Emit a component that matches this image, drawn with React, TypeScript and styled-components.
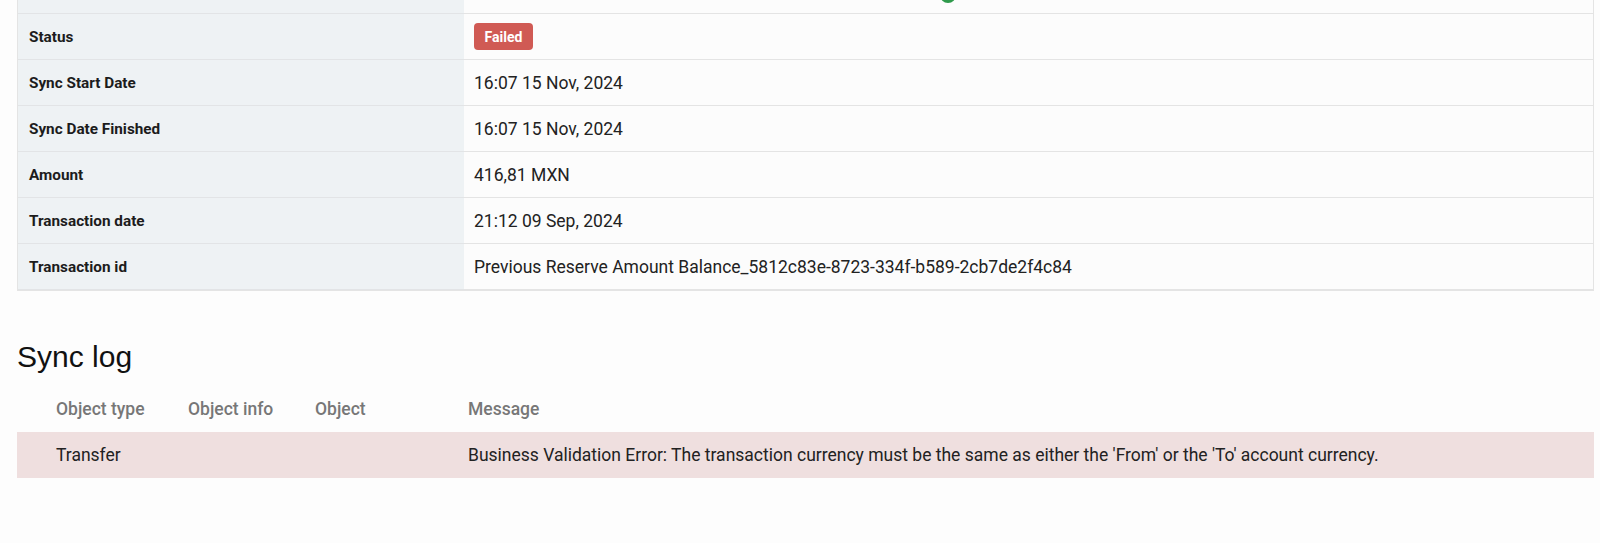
import { styled, createGlobalStyle } from 'styled-components';

const GlobalStyle = createGlobalStyle`
  body {
    margin: 0;
    background: #fdfdfd;
    font-family: Roboto, 'Liberation Sans', Arial, sans-serif;
    color: #222;
  }
`;

const Page = styled.div`
  padding: 0 6px 0 17px;
`;

const DetailTable = styled.div`
  display: grid;
  grid-template-columns: 446px 1fr;
  border: 1px solid #e4e4e4;
  border-top: none;
`;

const LabelCell = styled.div<{ partial?: boolean }>`
  height: ${(props) => (props.partial ? '13px' : '45px')};
  display: flex;
  align-items: center;
  padding-left: 11px;
  background: #eef2f4;
  border-bottom: 1px solid #e2e4e6;
  font-size: 15.3px;
  font-weight: 700;
  color: #1c1c1c;
`;

const ValueCell = styled.div<{ partial?: boolean }>`
  height: ${(props) => (props.partial ? '13px' : '45px')};
  display: flex;
  align-items: center;
  padding-left: 10px;
  background: #fcfcfc;
  border-bottom: 1px solid #e4e4e4;
  font-size: 17.5px;
  color: #222;
  overflow: hidden;
`;

const StatusMark = styled.svg`
  margin-left: 464px;
  align-self: flex-start;
`;

const Badge = styled.span`
  display: inline-flex;
  align-items: center;
  justify-content: center;
  width: 59px;
  height: 27px;
  border-radius: 4px;
  background: #d05a54;
  color: #fff;
  font-size: 14px;
  font-weight: 700;
`;

const Heading = styled.h2`
  margin: 46px 0 9px;
  height: 40px;
  line-height: 40px;
  font-family: 'Liberation Sans', Arial, sans-serif;
  font-size: 30px;
  font-weight: 400;
  color: #111;
`;

const LogRow = styled.div<{ tone?: 'head' | 'error' }>`
  display: grid;
  grid-template-columns: 39px 132px 127px 153px 1fr;
  align-items: center;
  height: 46px;
  background: ${(props) => (props.tone === 'error' ? '#efdfdf' : 'transparent')};
  color: ${(props) => (props.tone === 'head' ? '#777' : '#222')};
  font-size: 17.5px;
  font-weight: ${(props) => (props.tone === 'head' ? 500 : 400)};
`;

const rows: [string, React.ReactNode][] = [
  ['Status', <Badge>Failed</Badge>],
  ['Sync Start Date', '16:07 15 Nov, 2024'],
  ['Sync Date Finished', '16:07 15 Nov, 2024'],
  ['Amount', '416,81 MXN'],
  ['Transaction date', '21:12 09 Sep, 2024'],
  ['Transaction id', 'Previous Reserve Amount Balance_5812c83e-8723-334f-b589-2cb7de2f4c84']
];

export default function App() {
  return (
    <>
      <GlobalStyle />
      <Page>
        <DetailTable>
          <LabelCell partial />
          <ValueCell partial>
            <StatusMark width="20" height="13" viewBox="0 0 20 13">
              <circle cx="10" cy="-5" r="8" fill="#2f9a4c" />
            </StatusMark>
          </ValueCell>
          {rows.map(([label, value]) => (
            <>
              <LabelCell key={label}>{label}</LabelCell>
              <ValueCell>{value}</ValueCell>
            </>
          ))}
        </DetailTable>

        <Heading>Sync log</Heading>
        <LogRow tone="head">
          <span />
          <span>Object type</span>
          <span>Object info</span>
          <span>Object</span>
          <span>Message</span>
        </LogRow>
        <LogRow tone="error">
          <span />
          <span>Transfer</span>
          <span />
          <span />
          <span>
            Business Validation Error: The transaction currency must be the same as either the 'From' or the 'To' account currency.
          </span>
        </LogRow>
      </Page>
    </>
  );
}
